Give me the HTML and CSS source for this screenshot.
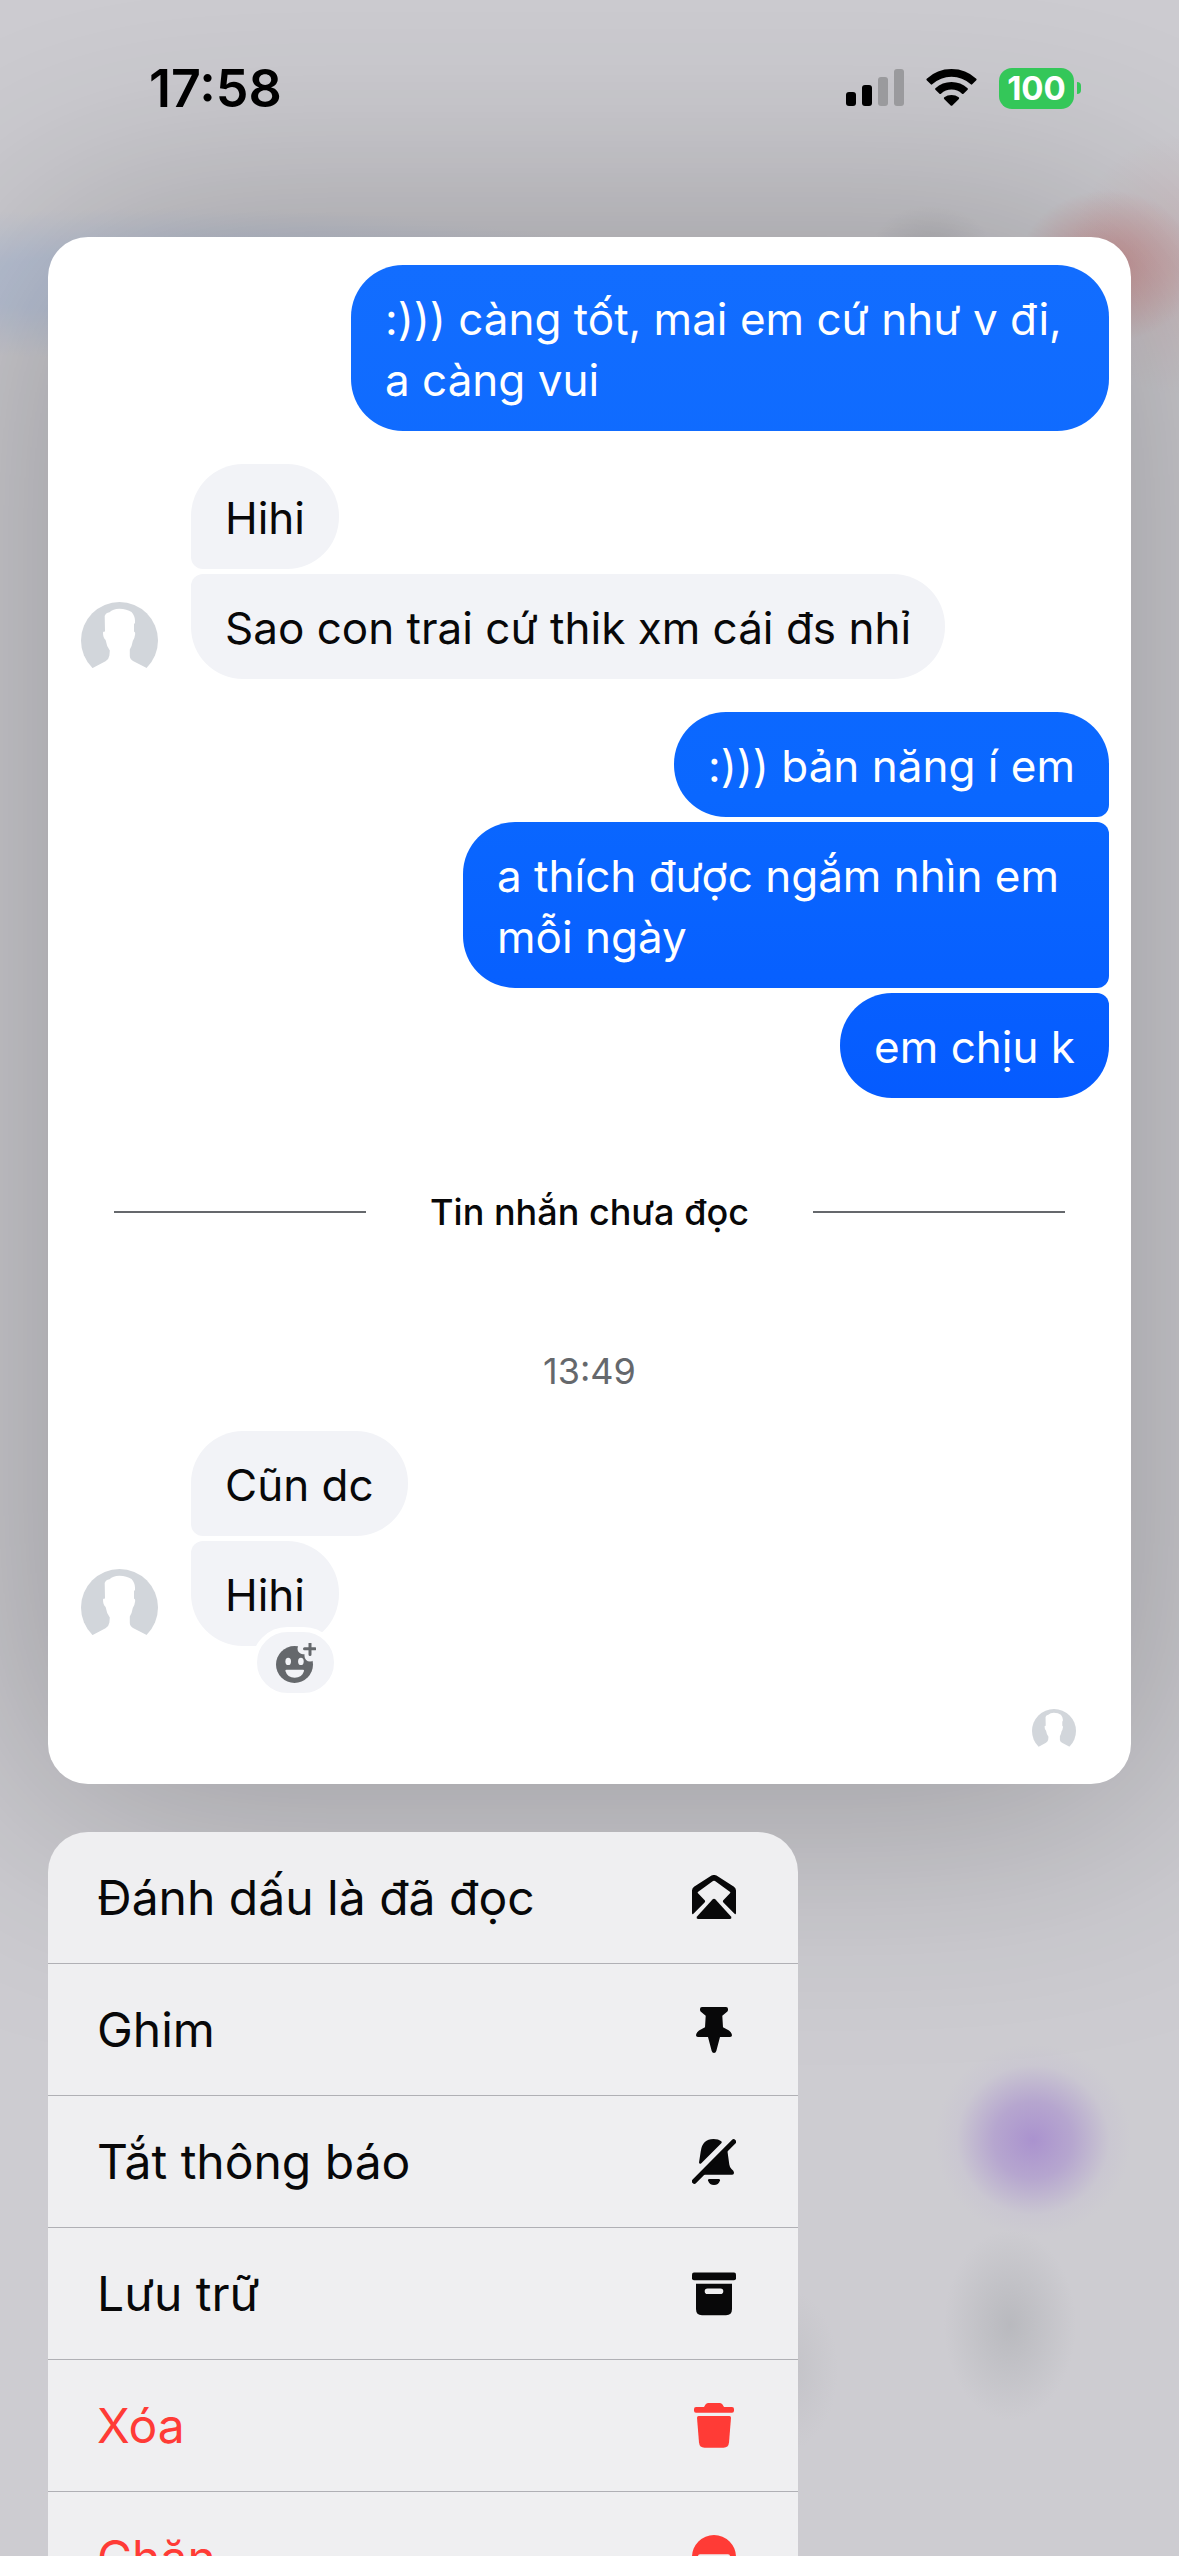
FILE: index.html
```html
<!DOCTYPE html>
<html lang="vi">
<head>
<meta charset="utf-8">
<meta name="viewport" content="width=device-width, initial-scale=1">
<title>Xem trước đoạn chat</title>
<link rel="stylesheet" href="styles.css">
</head>
<body>
<svg class="sprite" aria-hidden="true">
  <symbol id="avatar" viewBox="0 0 77 77">
    <circle cx="38.5" cy="38.5" r="38.5" fill="#d2d6db"/>
    <path fill="#fff" d="M0 77V72L11.7 66 24.5 59.2Q28 57 28.4 53.5L28.8 48.5Q25.5 44 24.6 38Q22 36 22 30.5Q22 29.5 24 29.5L23.7 14Q24.5 11 28.5 10.2Q32 6.8 38.3 6.7Q46 7 50.5 10Q54 14 54 18.5V21.5H53V29.5Q54.5 30 54.2 32Q53.5 37 51.8 39Q51 44 48.8 47.5V54Q49 57.5 52.5 59.2L65.7 66 77 72V77Z"/>
  </symbol>
</svg>

<header class="status">
  <time class="clock">17:58</time>
  <div class="indicators">
    <svg class="signal" viewBox="0 0 58 38" role="img" aria-label="Sóng di động">
      <rect x="0" y="23" width="10" height="14" rx="3"/>
      <rect x="16" y="16" width="10" height="21" rx="3"/>
      <rect x="32" y="8" width="10" height="29" rx="3" fill="#9a9a9d"/>
      <rect x="48" y="0" width="10" height="37" rx="3" fill="#9a9a9d"/>
    </svg>
    <svg class="wifi" viewBox="0 0 51 38" role="img" aria-label="Wi-Fi">
      <path d="M25.5 0Q40 0 50.3 9.7Q51 10.4 50.3 11.2L46.2 15.3Q45.500 16 44.800 15.300Q36.500 7.700 25.500 7.700T6.200 15.300Q5.500 16 4.800 15.300L.7 11.200Q0 10.400 .7 9.700Q11 0 25.500 0Z"/>
      <path d="M25.500 13Q34.700 13 41.600 19.200Q42.300 20 41.600 20.700L37.500 24.700Q36.800 25.300 36 24.700Q31.500 20.500 25.500 20.500T15 24.700Q14.200 25.300 13.500 24.700L9.400 20.700Q8.700 20 9.400 19.200Q16.300 13 25.500 13Z"/>
      <path d="M25.500 26Q29.600 26 32.700 28.300Q33.600 29 32.900 29.900L26.300 36.500Q25.500 37.200 24.700 36.500L18.100 29.900Q17.400 29 18.300 28.300Q21.400 26 25.500 26Z"/>
    </svg>
    <div class="battery"><span class="battery-level">100</span></div>
  </div>
</header>

<main class="preview">
  <section class="group sent">
    <p class="bubble">:))) càng tốt, mai em cứ như v đi, a càng vui</p>
  </section>

  <section class="group received">
    <svg class="avatar"><use href="#avatar"/></svg>
    <div class="stack">
      <p class="bubble">Hihi</p>
      <p class="bubble">Sao con trai cứ thik xm cái đs nhỉ</p>
    </div>
  </section>

  <section class="group sent">
    <p class="bubble">:))) bản năng í em</p>
    <p class="bubble wide">a thích được ngắm nhìn em<br>mỗi ngày</p>
    <p class="bubble">em chịu k</p>
  </section>

  <h2 class="unread">Tin nhắn chưa đọc</h2>
  <time class="sent-at">13:49</time>

  <section class="group received">
    <svg class="avatar"><use href="#avatar"/></svg>
    <div class="stack">
      <p class="bubble">Cũn dc</p>
      <div class="reactable">
        <p class="bubble">Hihi</p>
        <button class="react" type="button" aria-label="Bày tỏ cảm xúc">
          <svg viewBox="0 0 40 40">
            <circle cx="18.500" cy="21.500" r="18.500" fill="#65686c"/>
            <path d="M34 5.700H27M34 5.700V13" stroke="#f2f3f7" stroke-width="11" stroke-linecap="round" fill="none"/>
            <path d="M28.500 5.700H39M34 .5V11.500" stroke="#65686c" stroke-width="3" stroke-linecap="round"/>
            <ellipse cx="12.200" cy="18.400" rx="2.800" ry="3.600" fill="#f2f3f7"/>
            <ellipse cx="24.900" cy="18.400" rx="2.800" ry="3.600" fill="#f2f3f7"/>
            <path d="M10.500 26.700H27Q28.300 26.700 28 28Q26 34.800 18.700 34.800T9.400 28Q9.200 26.700 10.500 26.700Z" fill="#f2f3f7"/>
          </svg>
        </button>
      </div>
    </div>
  </section>

  <svg class="seen" role="img" aria-label="Đã xem"><use href="#avatar"/></svg>
</main>

<nav class="menu">
  <button class="item" type="button">Đánh dấu là đã đọc
    <svg viewBox="0 0 44 46">
      <path fill-rule="evenodd" d="M19.500 .6Q22 -.7 24.500 .6L42 11.800Q44 13.300 44 15.500V38Q43.800 40 42.300 38.600L31.400 27.400Q30.400 26.300 31.300 25.300L38 18.300Q38.700 17.300 37.800 16.700L23 6Q22 5.300 21 6L6.200 16.700Q5.300 17.300 6 18.300L12.700 25.300Q13.600 26.300 12.600 27.400L1.700 38.600Q.2 40 0 38V15.500Q0 13.300 2 11.800Z"/>
      <path d="M20.500 24.600Q22 23 23.500 24.600L39.200 41.700Q40 43.500 38.200 44H5.800Q4 43.500 4.800 41.700Z"/>
    </svg>
  </button>
  <button class="item" type="button">Ghim
    <svg viewBox="0 0 44 46">
      <path d="M10 0H34Q36 0 36 2V3Q36 4.200 34.500 5.300L30.300 8.800 31 20.200 37 23.500Q40 26 40 28.300Q40 30 38 30H28L24.300 44Q23.700 46 22 46T19.700 44L16 30H6Q4 30 4 28.300Q4 26 7 23.500L13 20.200 13.700 8.800 9.500 5.300Q8 4.200 8 3V2Q8 0 10 0Z"/>
    </svg>
  </button>
  <button class="item" type="button">Tắt thông báo
    <svg viewBox="0 0 44 46">
      <path d="M21.500 0Q26.500 0 29.300 2.200Q30.300 3.200 29.300 4.200L9.300 24.200Q7.500 25.500 7 23.500L8.800 12Q10.500 0 21.500 0Z"/>
      <path d="M2.400 42.300 41.600 2.700" stroke="#080808" stroke-width="5" stroke-linecap="round"/>
      <path d="M35.500 12.500 37.300 25.500Q37.600 28 39.500 30L41.300 31.800Q42.500 33.800 41.700 35Q41.200 35.800 40 35.800H11L35 11Z"/>
      <path d="M17 40H27Q28.300 40 28 41.500Q26.500 46 22 46T16 41.500Q15.700 40 17 40Z"/>
    </svg>
  </button>
  <button class="item" type="button">Lưu trữ
    <svg viewBox="0 0 44 46">
      <rect y="1.500" width="44" height="7.700" rx="2"/>
      <path fill-rule="evenodd" d="M4 12.800H40V38Q40 44.200 34 44.200H10Q4 44.200 4 38ZM15.500 17.500A2.800 2.800 0 0 0 15.500 23.100H28.500A2.800 2.800 0 0 0 28.500 17.500Z"/>
    </svg>
  </button>
  <button class="item danger" type="button">Xóa
    <svg viewBox="0 0 44 46">
      <path d="M4 4H12L13.500 1.500Q14.500 0 16 0H28Q29.500 0 30.500 1.500L32 4H40Q42 4 42 6V7.700Q42 9.700 40 9.700H4Q2 9.700 2 7.700V6Q2 4 4 4Z"/>
      <path d="M6.500 13H37.500Q39 13 39 14.800L37 39.500Q36.500 44.700 31.500 44.700H12.500Q7.500 44.700 7 39.500L5 14.800Q5 13 6.500 13Z"/>
    </svg>
  </button>
  <button class="item danger" type="button">Chặn
    <svg viewBox="0 0 44 46">
      <path fill-rule="evenodd" d="M22 0A22 22 0 0 1 22 44A22 22 0 0 1 22 0ZM8 19.300Q6 19.300 6 21V23Q6 24.700 8 24.700H36Q38 24.700 38 23V21Q38 19.300 36 19.300Z"/>
    </svg>
  </button>
</nav>
</body>
</html>
```

FILE: styles.css
```css
* {
  box-sizing: border-box;
}

body {
  margin: 0;
  height: 100vh;
  overflow: hidden;
  font-family: Inter, "Noto Sans", sans-serif;
  font-size: 44px;
  color: #080809;
  background:
    radial-gradient(ellipse 110px 130px at 100% 265px, rgba(196, 140, 140, .3), transparent),
    radial-gradient(ellipse 90px 76px at 94% 266px, rgba(200, 110, 110, .6), transparent),
    radial-gradient(ellipse 60px 45px at 79% 250px, rgba(120, 120, 124, .2), transparent),
    radial-gradient(ellipse 520px 76px at 14% 284px, rgba(176, 190, 216, .65) 40%, transparent),
    radial-gradient(ellipse 98px 96px at 1033px 2140px, rgba(168, 143, 206, .95), rgba(172, 150, 206, .7) 40%, rgba(190, 180, 210, .2) 78%, transparent),
    radial-gradient(ellipse 66px 95px at 1010px 2325px, rgba(165, 167, 172, .5), transparent),
    radial-gradient(ellipse 50px 80px at 788px 2370px, rgba(185, 185, 190, .5), transparent),
    #cdccd1;
}

h2,
p {
  margin: 0;
}

button {
  font: inherit;
  color: inherit;
  border: 0;
  cursor: pointer;
}

.sprite {
  display: none;
}

/* Status bar */
.status {
  display: flex;
  align-items: center;
  justify-content: space-between;
  height: 176px;
  margin-bottom: 61px;
  padding: 0 98px 0 149px;
  color: #000;
  position: relative;
  z-index: 1;
}

.clock {
  font-size: 52px;
  font-weight: 600;
}

.indicators {
  display: flex;
  align-items: center;
  gap: 22px;
}

.signal {
  width: 58px;
  height: 38px;
}

.wifi {
  width: 51px;
  height: 38px;
}

.battery {
  display: flex;
  align-items: center;
  gap: 3px;
}

.battery-level {
  width: 75px;
  line-height: 41px;
  border-radius: 13px;
  background: #34c759;
  color: #fff;
  font-size: 33px;
  font-weight: 700;
  text-align: center;
}

.battery::after {
  content: "";
  width: 4px;
  height: 12px;
  border-radius: 0 4px 4px 0;
  background: #34c759;
}

/* Conversation preview */
.preview {
  display: flex;
  flex-direction: column;
  margin: 0 48px;
  padding: 28px 22px 31px 33px;
  border-radius: 40px;
  background: #fff;
  box-shadow: 0 0 250px 20px rgba(0, 0, 0, .26);
}

.group {
  display: flex;
}

.group + .group {
  margin-top: 33px;
}

.sent {
  flex-direction: column;
  align-items: flex-end;
  gap: 5px;
}

.received {
  align-items: flex-end;
  gap: 33px;
}

.avatar {
  flex: none;
  width: 77px;
  height: 77px;
}

.stack {
  display: flex;
  flex-direction: column;
  align-items: flex-start;
  gap: 5px;
}

.bubble {
  padding: 24px 34px 20px;
  border-radius: 52px;
  background: #f2f3f7;
  line-height: 61px;
}

.sent .bubble {
  max-width: 758px;
  color: #fff;
  background: linear-gradient(#126dff 265px, #0a67ff 800px, #0459ff 1150px) fixed;
}

.sent .wide {
  min-width: 646px;
}

.sent .bubble:not(:last-child) {
  border-bottom-right-radius: 12px;
}

.sent .bubble:not(:first-child) {
  border-top-right-radius: 12px;
}

.stack > .bubble:first-child {
  border-bottom-left-radius: 12px;
}

.stack > :last-child,
.reactable .bubble {
  border-top-left-radius: 12px;
}

.unread {
  display: flex;
  align-items: center;
  gap: 64px;
  margin-top: 84px;
  padding: 0 44px 0 33px;
  font-size: 36px;
  font-weight: 500;
  line-height: 60px;
}

.unread::before,
.unread::after {
  content: "";
  flex: 1;
  height: 2px;
  background: #65686c;
}

.sent-at {
  margin: 105px 0 36px;
  padding-right: 11px;
  font-size: 36px;
  line-height: 48px;
  color: #65686c;
  text-align: center;
}

.reactable {
  position: relative;
}

.react {
  position: absolute;
  right: 0;
  bottom: -52px;
  display: grid;
  place-items: center;
  width: 87px;
  height: 71px;
  padding: 0;
  border: 5px solid #fff;
  border-radius: 36px;
  background: #f2f3f7;
}

.react svg {
  width: 40px;
  height: 40px;
}

.seen {
  align-self: flex-end;
  width: 44px;
  height: 44px;
  margin: 63px 33px 0 0;
}

/* Context menu */
.menu {
  display: flex;
  flex-direction: column;
  width: calc(100% - 96px);
  max-width: 750px;
  margin: 48px 48px 0;
  border-radius: 40px;
  background: #efeff1;
  overflow: hidden;
  position: relative;
}

.item {
  display: flex;
  align-items: center;
  justify-content: space-between;
  height: 132px;
  padding: 0 62px 0 49px;
  border-bottom: 1px solid #b0b0b5;
  background: none;
  font-size: 48px;
  text-align: left;
}

.item svg {
  width: 44px;
  height: 46px;
  fill: currentColor;
}

.danger {
  color: #ff3b36;
}
```
